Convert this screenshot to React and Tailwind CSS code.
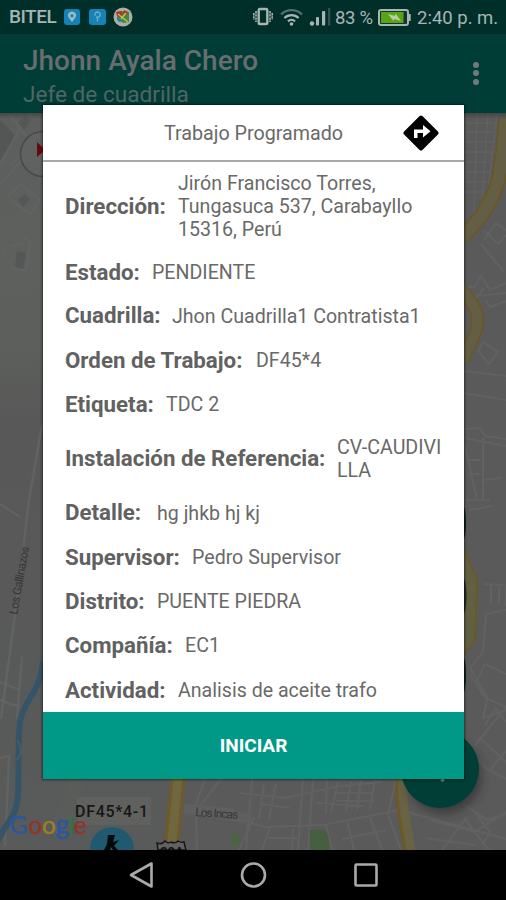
import React from "react";

const rows = [
  { label: "Dirección:", lines: ["Jirón Francisco Torres,", "Tungasuca 537, Carabayllo", "15316, Perú"], h: "h-[90.5px]", w: "w-[113px]" },
  { label: "Estado:", lines: ["PENDIENTE"], h: "h-[42.5px]", w: "w-[87px]" },
  { label: "Cuadrilla:", lines: ["Jhon Cuadrilla1 Contratista1"], h: "h-[44.3px]", w: "w-[107px]" },
  { label: "Orden de Trabajo:", lines: ["DF45*4"], h: "h-[44.3px]", w: "w-[191px]" },
  { label: "Etiqueta:", lines: ["TDC 2"], h: "h-[44.3px]", w: "w-[101px]" },
  { label: "Instalación de Referencia:", lines: ["CV-CAUDIVI", "LLA"], h: "h-[64px]", w: "w-[272px]" },
  { label: "Detalle:", lines: ["hg jhkb hj kj"], h: "h-[44.3px]", w: "w-[92px]" },
  { label: "Supervisor:", lines: ["Pedro Supervisor"], h: "h-[44.3px]", w: "w-[127px]" },
  { label: "Distrito:", lines: ["PUENTE PIEDRA"], h: "h-[44.3px]", w: "w-[92px]" },
  { label: "Compañía:", lines: ["EC1"], h: "h-[44.3px]", w: "w-[120px]" },
  { label: "Actividad:", lines: ["Analisis de aceite trafo"], h: "h-[44.3px]", w: "w-[113px]" },
];

function StatusBar() {
  return (
    <div className="flex h-[34px] shrink-0 items-center bg-[#002f2a] pl-[9px] pr-[8px] text-[#a8b5b3]">
      <span className="w-[55px] whitespace-nowrap pt-px text-[19px] font-medium tracking-[-0.5px]">BITEL</span>
      <svg width="16" height="16" viewBox="0 0 16 16">
        <rect width="16" height="16" rx="3" fill="#1583b5" />
        <path d="M8 13L4.3 8a4 4 0 1 1 7.4 0z" fill="#9dbdca" />
        <circle cx="8" cy="6.7" r="1.7" fill="#347f9f" />
      </svg>
      <svg className="ml-[9px]" width="17" height="16" viewBox="0 0 17 16">
        <rect width="17" height="16" rx="3" fill="#1583b5" />
        <path d="M8.5 8.2a2.6 2.6 0 1 0-2.3-1.5M8.5 8v4.5M7 8.2h3" fill="none" stroke="#75afc9" strokeWidth="1.3" />
      </svg>
      <svg className="ml-[7px]" width="20" height="20" viewBox="0 0 20 20">
        <circle cx="10" cy="10" r="9.5" fill="#a8afa9" />
        <path d="M4 5l4-1 8 1v10l-5 1-7-3z" fill="#3f8a3f" />
        <path d="M3 5l5-1 2 4-3 2-3-1z" fill="#ad3530" />
        <path d="M11 3l4 2-1 3-4-2z" fill="#b0342f" />
        <path d="M5 7l10 8M13 6l-6 7" stroke="#d0bd43" strokeWidth="1.4" />
        <path d="M4 12l3-2 2 4-3 1z" fill="#317ca0" />
      </svg>
      <div className="ml-auto flex items-center">
        <svg width="20" height="20" viewBox="0 0 20 20" fill="none" stroke="#a8b5b3">
          <rect x="5.7" y="2" width="8.6" height="15" rx="1.3" strokeWidth="2.4" />
          <path d="M3 4v11M17 4v11M.8 6v7M19.2 6v7" strokeWidth="1.6" strokeDasharray="2.4 .8" />
        </svg>
        <svg className="ml-[7px]" width="23" height="18" viewBox="0 0 23 18" fill="none" strokeWidth="2.2">
          <path d="M1 6.5a15 15 0 0 1 21 0" stroke="#51706b" />
          <path d="M4.4 10a10 10 0 0 1 14.2 0M8 13.4a5 5 0 0 1 7 0" stroke="#a8b5b3" />
          <circle cx="11.5" cy="16" r="1.8" fill="#a8b5b3" stroke="none" />
        </svg>
        <svg className="ml-[6px]" width="22" height="18" viewBox="0 0 22 18" fill="#a8b5b3">
          <circle cx="3" cy="15.5" r="2.2" />
          <rect x="7" y="9" width="3" height="8.5" rx="1" />
          <rect x="13" y="3" width="3.2" height="14.5" rx="1" />
          <rect x="19" y="0" width="2.3" height="17.5" fill="#35514d" />
        </svg>
        <span className="ml-[4px] w-[39px] whitespace-nowrap pt-[3px] text-[18.5px] tracking-[-0.3px]">83 %</span>
        <svg className="ml-[4px]" width="33" height="17" viewBox="0 0 33 17">
          <rect x="1" y="1" width="29" height="15" rx="2" fill="#17352c" stroke="#a8b5b3" strokeWidth="2" />
          <rect x="3" y="3" width="22.5" height="11" fill="#58a514" />
          <path d="M31.7 5v7" stroke="#a8b5b3" strokeWidth="2" />
          <path d="M10 5l7 2 .5-2.5L23 12l-7-2-.5 2z" fill="#b9cbac" />
        </svg>
        <span className="ml-[6px] w-[81px] whitespace-nowrap pt-[3px] text-[18.5px]">2:40 p. m.</span>
      </div>
    </div>
  );
}

function CityMap() {
  return (
    <svg className="block h-[737px] w-[506px]" viewBox="0 113 506 737">
      <defs>
        <linearGradient id="land" x1="0" y1="0" x2="0" y2="1">
          <stop offset="0" stopColor="#5d5e5e" />
          <stop offset=".18" stopColor="#5d605d" />
          <stop offset=".32" stopColor="#5c5f5b" />
          <stop offset=".42" stopColor="#585858" />
          <stop offset="1" stopColor="#585b59" />
        </linearGradient>
        <linearGradient id="edge" x1="0" y1="0" x2="0" y2="1">
          <stop offset="0" stopColor="#000" stopOpacity=".25" />
          <stop offset="1" stopColor="#000" stopOpacity="0" />
        </linearGradient>
        <filter id="soft" x="-30%" y="-30%" width="160%" height="160%"><feGaussianBlur stdDeviation="4" /></filter>
      </defs>
      <rect y="113" width="506" height="737" fill="url(#land)" />
      <rect x="160" y="113" width="346" height="737" fill="#5a5a5a" />
      <path d="M0 120l16 16-16 25z" fill="#545555" />
      <g fill="none" stroke="#616262" strokeWidth="2.4">
        <path d="M9 114l11 14-20 37M22 129l9-15M20 130l12 10-22 27M0 184l24-26 18 25M8 196l13-12 19 16-10 14-19-14M22 235l8 8-4 28-17-4M25 243l-15 3M0 249l5 2-3 10" />
        <path d="M42 425L29 500 17 600 3 705M0 504l20 13M22 656l-5 62M8 663l-7 56M0 682l20 8M0 700l20 7M0 758l9-2-4 90" />
      </g>
      <g fill="#555656">
        <path d="M18 200l7-6 5 5-7 8zM18 122l8-6 5 4-7 10zM17 251l9 2-3 16-8-2z" />
      </g>
      <path d="M43 661c-2 31-19 38-23 61-3 26 0 63-3 80-2 16-9 17-20 40" fill="none" stroke="#365468" strokeWidth="6" />
      <path d="M17 740q8 10 0 20" fill="none" stroke="#52656c" strokeWidth="1" />
      <text x="0" y="0" transform="translate(17 615) rotate(-80)" fontSize="11.5" fill="#343535" textLength="69">Los Gallinazos</text>

      <g fill="none" stroke="#616161" strokeWidth="2.2">
        <path d="M466 123h28M466 132h28M466 142h29M466 152h28M466 162h26M466 172h24M466 182h21M466 192h18M477 114l-3 105M488 114l-6 87M497 114l-9 76" strokeWidth="1.4" />
        <path d="M481 244l23 28M484 240l12-17 10 7M485 231l13 13 8-9M464 287h11l6-11 9 14 16-7M475 296l31-3M476 298l8-10M486 300l4 7 16-6M478 351l11 13 9-12-15-10zM464 371l42 5M464 393l42 7M465 429l15-1 5 8 21 3M465 438l41 8M483 438v61M465 446l12 54M467 460h13M468 474h13M484 480l18-2M465 500h25M469 510l23-4" />
        <path d="M484 584l22 1M506 584v22M499 584v19M491 584v19M506 610l-20 4-3 38-13 16 18 31 18 8M470 675l17 25-4 18 23-8M478 679l7-15 21 10M475 745l31-38M473 755l16 16 17-20M485 725l11-17 10 14M480 738l26 24M491 771l15 8" />
        <path d="M205 779l-9 25 1 46M221 779l-20 26M252 779l-6 71M303 779l-5 71M313 779l-5 71M327 779l-1 35M173 811l63 7 29 9 58-2 77-15 106 29M198 806l36 4M240 793l45 5 54-12 43-4M254 817l-15 33M270 827l-8 23M293 829l-1 21M326 826l6 24M347 820l7 30M370 818l12 32M396 779l-8 36 13 35M260 804l30 4M264 784l-5 35M276 783l-7 36M317 803l46 3M338 782l-7 30M351 782l-5 29M361 780l-4 30M375 779l-5 30M337 793h36M336 801h38M265 838h32M342 839l44-9M430 820l45 12 31-20M442 850l23-31 24 31M475 812l15 20-8 13M425 838l51 7M463 804l24 16 19-6" />
      </g>
      <path d="M77 779L58 835" stroke="#5c5e5c" strokeWidth="16" opacity=".6" />
      <path d="M310 830h15q4 4 5 20h-20z" fill="#455f40" />
      <ellipse cx="235" cy="840" rx="5" ry="7" fill="#4c6446" />
      <g fill="none">
        <path d="M506 119c-5 47-4 62-19 87-7 14-14 20-26 32" stroke="#6a5722" strokeWidth="15" />
        <path d="M506 119c-5 47-4 62-19 87-7 14-14 20-26 32" stroke="#645e44" strokeWidth="12" />
        <path d="M462 290c15 18 18 26 14 40-3 14-11 19-13 32" stroke="#6a5722" strokeWidth="13" />
        <path d="M462 290c15 18 18 26 14 40-3 14-11 19-13 32" stroke="#645e44" strokeWidth="10" />
        <path d="M460 540l17 40-2 60-15 19z" fill="#626043" stroke="#6b5920" strokeWidth="1.6" />
        <path d="M178 779l-7 71" stroke="#705a28" strokeWidth="15" />
        <path d="M178 779l-7 71" stroke="#6e673f" strokeWidth="9" />
        <path d="M401 779c-2 22 4 45 8 71" stroke="#6b5928" strokeWidth="11" />
        <path d="M403 779c-2 22 4 45 8 71" stroke="#676344" strokeWidth="9" />
      </g>
      <path d="M184 808l67 11" stroke="#5f5f5f" strokeWidth="10" />
      <text transform="translate(195 816) rotate(4)" fontSize="12" fill="#383939" textLength="43">Los Incas</text>
      <path d="M157 843q5 2 8-2 3 3 6 1 4 2 7-1 3 2 6 1l2 8h-28z" fill="#626262" stroke="#171717" strokeWidth="1.5" />
      <text x="160" y="856" fontSize="13" fontWeight="700" fill="#111">20A</text>

      <circle cx="43" cy="154" r="22.5" fill="#606161" stroke="#484949" strokeWidth="1.6" />
      <path d="M37 142l8 8-8 7z" fill="#660b08" />
      <g fill="#0c1f1b">
        <ellipse cx="463" cy="523" rx="3" ry="17" />
        <ellipse cx="463" cy="596" rx="3.5" ry="18" opacity=".8" />
        <ellipse cx="463" cy="675" rx="3" ry="18" />
      </g>
      <rect x="77" y="797" width="74" height="28" fill="#60605f" />
      <g fontFamily="Lato, sans-serif" fontSize="26" strokeWidth=".5">
        <text y="834">
          <tspan x="9.5" fontSize="24.5" fill="#2c569f" stroke="#2c569f">G</tspan>
          <tspan x="28.5" fontSize="24.5" fill="#93342c" stroke="#93342c">o</tspan>
          <tspan x="42" fontSize="24.5" fill="#9a8022" stroke="#9a8022">o</tspan>
          <tspan x="55.5" fill="#2c569f" stroke="#2c569f">g</tspan>
          <tspan x="68.8" fontSize="24" fill="#2f7540" stroke="#2f7540">l</tspan>
          <tspan x="73.7" fontSize="24.5" fill="#93342c" stroke="#93342c">e</tspan>
        </text>
      </g>
      <text x="75" y="817" fontSize="16" fontWeight="500" fill="#161616" textLength="73">DF45*4-1</text>
      <circle cx="112" cy="849" r="22" fill="#205a70" />
      <path d="M108 835h7l-2 7 6-2-5 6 4 4h-5l-2-3-1 3h-6l3-6z" fill="#06090a" />
      <circle cx="444" cy="776" r="38" fill="#292c2b" filter="url(#soft)" opacity=".6" />
      <circle cx="440" cy="769" r="39" fill="#003e36" />
      <path d="M442.500 778l2.500 2-2.500 2-2.500-2z" fill="#75827f" />
      <rect y="113" width="506" height="6" fill="url(#edge)" />
    </svg>
  );
}

function Dialog() {
  return (
    <div className="absolute left-[43px] top-[105px] flex w-[421px] flex-col bg-white shadow-[0_0_2px_1px_rgba(0,0,0,0.5)]">
      <div className="relative flex h-[56.5px] items-center justify-center border-b-2 border-[#a8a8a8]">
        <span className="mt-[3px] whitespace-nowrap text-[19.7px] text-[#696969]">Trabajo Programado</span>
        <svg className="absolute right-[25px] top-[10px]" width="36" height="36" viewBox="0 0 36 36">
          <path d="M16.6 1.1q1.4-1.4 2.8 0l15.5 15.5q1.4 1.4 0 2.8L19.4 34.9q-1.4 1.4-2.8 0L1.1 19.4q-1.4-1.4 0-2.8z" fill="#000" />
          <path d="M11 23v-8.5h9V10l7.5 6.3L20 22.5V18h-5.5v5z" fill="#fff" />
        </svg>
      </div>
      <div className="-mt-[0.5px] flex h-[551px] flex-col pl-[22px]">
        {rows.map((r) => (
          <div key={r.label} className={`flex shrink-0 items-center ${r.h}`}>
            <div className={`shrink-0 whitespace-nowrap text-[22.3px] font-bold text-[#616161] ${r.w}`}>{r.label}</div>
            <div className="whitespace-nowrap text-[19.6px] leading-[23px] text-[#696969]">
              {r.lines.map((l) => (
                <div key={l}>{l}</div>
              ))}
            </div>
          </div>
        ))}
      </div>
      <button className="h-[67px] bg-[#009988] pt-[2px] text-[19px] font-bold text-white">INICIAR</button>
    </div>
  );
}

export default function App() {
  return (
    <div className="relative flex h-[900px] w-[506px] flex-col overflow-hidden bg-black font-['Roboto',sans-serif]">
      <StatusBar />
      <header className="flex h-[79px] shrink-0 items-start justify-between bg-[#003d36] pl-[23px] pr-[27px]">
        <div>
          <h1 className="mt-[10px] whitespace-nowrap text-[28px] font-medium leading-[34px] text-[#686d6f]">Jhonn Ayala Chero</h1>
          <p className="mt-[3px] whitespace-nowrap text-[22.6px] leading-[28px] text-[#4e6664]">Jefe de cuadrilla</p>
        </div>
        <div className="mt-[28px] flex flex-col gap-[2.4px]">
          <i className="size-[6px] rounded-full bg-[#72797b]" />
          <i className="size-[6px] rounded-full bg-[#72797b]" />
          <i className="size-[6px] rounded-full bg-[#72797b]" />
        </div>
      </header>
      <CityMap />
      <nav className="relative flex h-[50px] shrink-0 items-center bg-black pl-[128px]">
        <svg width="252" height="30" viewBox="0 0 252 30" fill="none" stroke="#aaa" strokeWidth="2.6">
          <path d="M23.5 3.5v23L3 15z" strokeLinejoin="round" />
          <circle cx="125.5" cy="15" r="11.5" />
          <rect x="227.5" y="4.5" width="21" height="21" rx="1" />
        </svg>
      </nav>
      <Dialog />
    </div>
  );
}
